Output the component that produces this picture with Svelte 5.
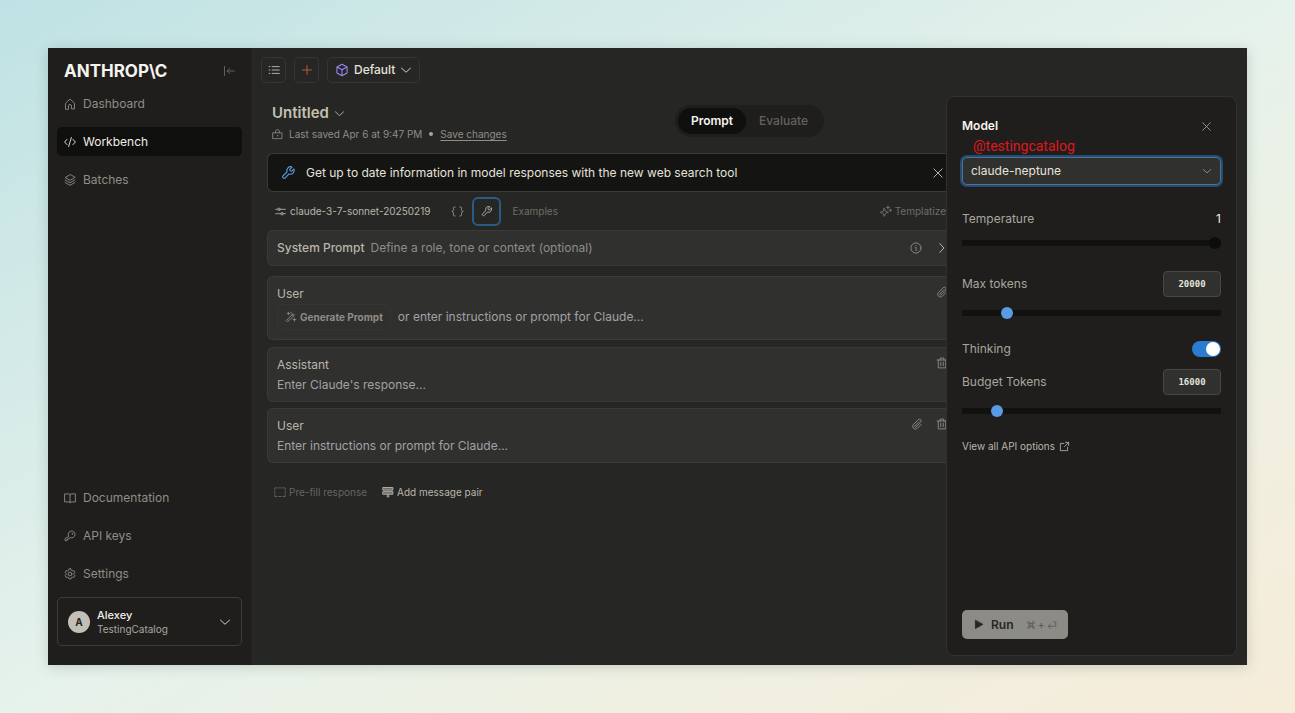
<script>
  let temperature = $state(1);
  let maxTokens = $state(20000);
  let budgetTokens = $state(16000);
  let thinking = $state(true);
  let model = $state('claude-neptune');

  const mainLinks = [
    { label: 'Dashboard', icon: 'home' },
    { label: 'Workbench', icon: 'code', active: true },
    { label: 'Batches', icon: 'stack' }
  ];
  const footLinks = [
    { label: 'Documentation', icon: 'book' },
    { label: 'API keys', icon: 'key' },
    { label: 'Settings', icon: 'gear' }
  ];
</script>

{#snippet icon(name, size = 14)}
  <svg class="icon" width={size} height={size} viewBox="0 0 16 16" aria-hidden="true">
    {#if name === 'home'}
      <path d="M2 14.500V7L8 1.300 14 7v7.500H10v-3.800a2 2 0 0 0-4 0v3.800z" />
    {:else if name === 'code'}
      <path d="M4 4.500.8 8 4 11.500M12 4.500 15.200 8 12 11.500M9.800 2 6.200 14" />
    {:else if name === 'stack'}
      <path d="M8 1 1.500 4.700 8 8.400l6.500-3.700zM1.500 8 8 11.700 14.500 8M1.500 11.300 8 15l6.500-3.700" />
    {:else if name === 'book'}
      <path d="M8 4C8 3 7.200 2.500 6.400 2.500H.8v10.700h5.600c.8 0 1.600.3 1.600 1.200 0-.9.8-1.200 1.600-1.200h5.600V2.500H9.600C8.800 2.500 8 3 8 4v10.400" />
    {:else if name === 'key'}
      <path d="M6.100 8.200A4.600 4.600 0 1 1 8.200 10.100L7 11.200H5.500v1.500H4v1.500H1.500v-2.300z" />
      <circle cx="11" cy="5" r=".5" />
    {:else if name === 'gear'}
      <circle cx="8" cy="8" r="2.500" />
      <path d="m6.800 1.300-.5 1.700-1.500.8-1.800-.4-1.500 2.400 1.200 1.300v1.800l-1.200 1.300L3 12.600l1.800-.4 1.500.8.5 1.700h2.400l.5-1.700 1.500-.8 1.800.4 1.500-2.400-1.200-1.300V7.100l1.200-1.300L13 3.400l-1.800.4L9.700 3l-.5-1.700z" />
    {:else if name === 'collapse'}
      <path d="M2 2v12M15 8H5.500M9 4.500 5.500 8 9 11.500" />
    {:else if name === 'down'}
      <path d="m2 5.500 6 5.500 6-5.500" />
    {:else if name === 'right'}
      <path d="m5 2 5.500 6L5 14" />
    {:else if name === 'list'}
      <path d="M5.500 3.500H15M5.500 8H15M5.500 12.500H15M1.500 3.500h1M1.500 8h1M1.500 12.500h1" />
    {:else if name === 'plus'}
      <path d="M8 2v12M2 8h12" />
    {:else if name === 'cube'}
      <path d="m8 1.500 5.800 3.100v6.800L8 14.500l-5.800-3.100V4.600zM2.200 4.600 8 7.800l5.800-3.200M8 7.800v6.700" />
    {:else if name === 'lock'}
      <path d="M1.500 5.500h13v8.500h-13zM5 5.500V4a3 3 0 0 1 6 0v1.500" />
      <circle cx="8" cy="9.800" r=".4" />
    {:else if name === 'wrench'}
      <path d="M13.800 4.200 11.500 6.500 9.800 6.200 9.500 4.500l2.300-2.300a4 4 0 0 0-5.300 5.200L2.200 11.500a1.600 1.600 0 0 0 2.300 2.300l4.100-4.300a4 4 0 0 0 5.200-5.300z" />
    {:else if name === 'sliders'}
      <path d="M1 4.800h3M7.500 4.800H15M1 11.200h7.500M12 11.200h3" />
      <circle cx="5.800" cy="4.800" r="1.800" />
      <circle cx="10.200" cy="11.200" r="1.800" />
    {:else if name === 'braces'}
      <path d="M5 2.500H4.500C2.500 2.500 3 4 3 5.500S2.800 7.500 1 8c1.800.5 2 1 2 2.500s-.5 3 1.500 3H5M11 2.500h.5c2 0 1.500 1.500 1.500 3s.2 2 2 2.500c-1.800.5-2 1-2 2.500s.5 3-1.500 3H11" />
    {:else if name === 'sparkle'}
      <path d="m6.500 4 1.400 3.600 3.600 1.400-3.600 1.400-1.400 3.600-1.400-3.600L1.500 9l3.600-1.400zM11 1v4M9 3h4M14 5v3M12.500 6.500h3" />
    {:else if name === 'info'}
      <circle cx="8" cy="8" r="6.800" />
      <path d="M7.200 7.300H8V11.200h.8M8 4.600v.4" />
    {:else if name === 'wand'}
      <path d="m2 12.300 8.800-8.800 1.800 1.800-8.800 8.800zM9.200 5l1.800 1.800M4.500 2v3M3 3.500h3M12.500 9.500v4M10.500 11.500h4M8 1.500v1.500" />
    {:else if name === 'clip'}
      <path d="M10.500 5 5.300 10.300a1 1 0 0 0 1.500 1.500l6-6.200a2.300 2.300 0 0 0-3.300-3.300L3.300 8.600a3.600 3.600 0 0 0 5.100 5.100L13.500 8.500" />
    {:else if name === 'trash'}
      <path d="M1.500 4h13M3 4v10.500h10V4M5.500 4V1.500h5V4M6.300 7v4.500M9.700 7v4.500" />
    {:else if name === 'dashed'}
      <path d="M1 5V2.500h3M6.300 2.500h3.400M12 2.500h3V5M15 7v2.500M15 11.500V14h-3M9.700 14H6.300M4 14H1v-2.500M1 9.500V7" />
    {:else if name === 'pair'}
      <path fill="currentColor" fill-opacity=".5" d="M1.500 2h13v3.500h-13zM1.500 7.500h13V11h-13z" />
      <path d="M8 11v4M6.500 13.500h3" />
    {:else if name === 'external'}
      <path d="M9.500 2H14v4.500M14 2 8 8M7 3.500H2V14h10.500V9" />
    {:else if name === 'close'}
      <path d="m2.500 2.500 11 11M13.500 2.500l-11 11" />
    {:else if name === 'play'}
      <path fill="currentColor" d="M3.500 2.200v11.600L14 8z" />
    {:else if name === 'command'}
      <path d="M6 6h4v4H6zM6 6H4.200A1.800 1.800 0 1 1 6 4.200zM10 6V4.200A1.800 1.800 0 1 1 11.800 6zM10 10h1.800a1.800 1.800 0 1 1-1.800 1.800zM6 10v1.800A1.800 1.800 0 1 1 4.200 10z" />
    {:else if name === 'return'}
      <path d="M10 3h4v7H2.500M5.500 6.500 2 10l3.500 3.500" />
    {/if}
  </svg>
{/snippet}

{#snippet navLink(item)}
  <a href="#{item.icon}" class:active={item.active}>
    {@render icon(item.icon, 12)}
    {item.label}
  </a>
{/snippet}

<div class="window">
  <aside class="sidebar">
    <div class="brand">
      <strong>ANTHROP\C</strong>
      <button class="plain" aria-label="Collapse sidebar">{@render icon('collapse', 12)}</button>
    </div>
    <nav aria-label="Main">
      {#each mainLinks as item}{@render navLink(item)}{/each}
    </nav>
    <nav class="foot" aria-label="Resources">
      {#each footLinks as item}{@render navLink(item)}{/each}
    </nav>
    <button class="account">
      <span class="avatar">A</span>
      <span class="who"><b>Alexey</b><small>TestingCatalog</small></span>
      {@render icon('down', 12)}
    </button>
  </aside>

  <main>
    <div class="toolbar">
      <button aria-label="Prompt list">{@render icon('list', 12)}</button>
      <button class="add" aria-label="New prompt">{@render icon('plus', 12)}</button>
      <button class="space">
        <span class="cube">{@render icon('cube', 14)}</span>Default{@render icon('down', 12)}
      </button>
    </div>

    <div class="stage">
      <header>
        <div class="doc">
          <button class="title plain">Untitled {@render icon('down', 11)}</button>
          <div class="saved">
            {@render icon('lock', 11)}
            <span>Last saved Apr 6 at 9:47 PM</span>
            <i></i>
            <a href="#save">Save changes</a>
          </div>
        </div>
        <div class="tabs" role="tablist">
          <button role="tab" aria-selected="true">Prompt</button>
          <button role="tab" aria-selected="false">Evaluate</button>
        </div>
      </header>

      <section class="editor">
        <div class="banner">
          <span class="blue">{@render icon('wrench', 15)}</span>
          <span>Get up to date information in model responses with the new web search tool</span>
          <button class="plain end" aria-label="Dismiss">{@render icon('close', 12)}</button>
        </div>

        <div class="tools">
          <button class="plain model">{@render icon('sliders', 11)}claude-3-7-sonnet-20250219</button>
          <button class="plain" aria-label="Variables">{@render icon('braces', 13)}</button>
          <button class="plain focused" aria-label="Tools">{@render icon('wrench', 12)}</button>
          <button class="plain muted">Examples</button>
          <button class="plain muted end">{@render icon('sparkle', 13)}Templatize</button>
        </div>

        <div class="card system">
          <button class="plain prompt"><b>System Prompt</b><span>Define a role, tone or context (optional)</span></button>
          <button class="plain" aria-label="About system prompts">{@render icon('info', 12)}</button>
          <button class="plain bright" aria-label="Expand">{@render icon('right', 12)}</button>
        </div>

        <div class="card first">
          <div class="head">
            <label for="user-1">User</label>
            <button class="plain" aria-label="Attach file">{@render icon('clip', 12)}</button>
          </div>
          <div class="generate">
            <button>{@render icon('wand', 12)}Generate Prompt</button>
            <textarea id="user-1" rows="1" placeholder="or enter instructions or prompt for Claude..."></textarea>
          </div>
        </div>

        <div class="card turn">
          <div class="head">
            <label for="assistant-1">Assistant</label>
            <button class="plain" aria-label="Delete message">{@render icon('trash', 12)}</button>
          </div>
          <textarea id="assistant-1" rows="1" placeholder="Enter Claude's response..."></textarea>
        </div>

        <div class="card turn">
          <div class="head">
            <label for="user-2">User</label>
            <button class="plain" aria-label="Attach file">{@render icon('clip', 12)}</button>
            <button class="plain" aria-label="Delete message">{@render icon('trash', 12)}</button>
          </div>
          <textarea id="user-2" rows="1" placeholder="Enter instructions or prompt for Claude..."></textarea>
        </div>

        <div class="actions">
          <button class="plain faint">{@render icon('dashed', 12)}Pre-fill response</button>
          <button class="plain pairs">{@render icon('pair', 12)}Add message pair</button>
        </div>
      </section>

      <aside class="panel">
        <div class="row heading">
          <h2><label for="model">Model</label></h2>
          <button class="plain" aria-label="Close panel">{@render icon('close', 11)}</button>
          <span class="handle">@testingcatalog</span>
        </div>
        <div class="select">
          <select id="model" bind:value={model}>
            <option>claude-neptune</option>
          </select>
          {@render icon('down', 10)}
        </div>

        <div class="row temp">
          <label for="temperature">Temperature</label>
          <output for="temperature">{temperature}</output>
        </div>
        <input class="dark" id="temperature" type="range" min="0" max="1" step="0.1" bind:value={temperature} />

        <div class="row field spaced">
          <label for="max-tokens">Max tokens</label>
          <input id="max-tokens" type="text" inputmode="numeric" bind:value={maxTokens} />
        </div>
        <input type="range" aria-label="Max tokens" min="0" max="128000" bind:value={maxTokens} />

        <div class="row thinking">
          <label for="thinking">Thinking</label>
          <input id="thinking" type="checkbox" role="switch" bind:checked={thinking} />
        </div>

        <div class="row field">
          <label for="budget">Budget Tokens</label>
          <input id="budget" type="text" inputmode="numeric" bind:value={budgetTokens} />
        </div>
        <input type="range" aria-label="Budget tokens" min="1024" max="128000" bind:value={budgetTokens} />

        <a class="options" href="#api-options">View all API options {@render icon('external', 11)}</a>

        <button class="run">
          {@render icon('play', 11)}<b>Run</b>
          <kbd>{@render icon('command', 10)}<span>+</span>{@render icon('return', 10)}</kbd>
        </button>
      </aside>
    </div>
  </main>
</div>

<style>
  :global(body) {
    margin: 0;
    background: linear-gradient(to bottom right, #bfe2e4 0%, #d6ebe8 28%, #e6f2ec 50%, #f0f0e1 75%, #f6ecda 100%);
  }
  .window, .window * { box-sizing: border-box; }
  .window {
    display: grid;
    grid-template-columns: 204px minmax(0, 1fr);
    min-height: calc(100vh - 96px);
    margin: 48px;
    background: #262624;
    color: #c3c1b7;
    font: 12px/16px Inter, sans-serif;
    box-shadow: 0 2px 12px rgb(60 80 70 / 22%);
  }
  .icon {
    flex: none;
    display: block;
    fill: none;
    stroke: currentColor;
    stroke-width: 1.2;
    stroke-linejoin: round;
    stroke-linecap: round;
  }
  button {
    display: flex;
    align-items: center;
    font: inherit;
    color: inherit;
    background: none;
    border: 1px solid #353532;
    border-radius: 5px;
    padding: 0;
    white-space: nowrap;
    cursor: pointer;
  }
  .plain { border: 0; }
  a { color: inherit; text-decoration: none; }
  .end { margin-left: auto; }
  b { font-weight: 500; }

  .sidebar {
    display: flex;
    flex-direction: column;
    background: #1f1e1d;
    border-right: 1px solid #232321;
    padding: 14px 9px 19px 9px;
    color: #8f8d85;
  }
  .brand {
    display: flex;
    align-items: center;
    justify-content: space-between;
    padding: 0 7px;
    height: 18px;
    margin-bottom: 9px;
    color: #6a6963;
  }
  .brand strong { font-size: 17px; font-weight: 700; color: #f5f4ee; }
  nav { display: flex; flex-direction: column; gap: 9px; }
  nav a {
    display: flex;
    align-items: center;
    gap: 7px;
    height: 29px;
    padding: 0 7px;
    border-radius: 5px;
  }
  nav a.active { background: #0f0f0e; color: #f0eee6; }
  .foot { margin-top: auto; margin-bottom: 9px; }
  .account {
    height: 49px;
    padding: 0 10px;
    gap: 7px;
    text-align: left;
    color: #e5e3da;
    border-color: #3d3d3a;
  }
  .avatar {
    display: grid;
    place-items: center;
    width: 22px;
    height: 22px;
    border-radius: 50%;
    background: #c2c0b6;
    color: #262624;
    font-size: 10px;
    font-weight: 700;
  }
  .who { flex: 1; display: grid; line-height: 14px; font-size: 11px; color: #f0eee6; }
  .who small { font-size: 10px; color: #a8a69c; }

  main { display: flex; flex-direction: column; min-width: 0; }
  .toolbar { display: flex; gap: 8px; padding: 9px 9px 13px; color: #c3c1b7; }
  .toolbar button { height: 26px; min-width: 25px; justify-content: center; }
  .toolbar .add { color: #c6613f; }
  .toolbar .space { padding: 0 7px; gap: 5px; font-weight: 500; color: #e5e3da; }
  .cube { color: #9b87f5; }

  .stage {
    flex: 1;
    display: grid;
    grid-template-columns: minmax(0, 1fr) 291px;
    grid-template-rows: auto 1fr;
    padding-right: 10px;
    padding-bottom: 9px;
  }
  header {
    grid-area: 1 / 1 / 2 / 3;
    display: grid;
    grid-template-columns: 1fr auto 1fr;
    align-items: start;
    padding: 7px 0 0 10px;
    height: 57px;
  }
  .doc { padding-left: 10px; }
  .title { gap: 5px; font-size: 15px; line-height: 20px; font-weight: 600; color: #c3c1b0; }
  .saved {
    display: flex;
    align-items: center;
    gap: 6px;
    font-size: 10px;
    line-height: 14px;
    margin-top: 4px;
    color: #8f8d85;
    white-space: nowrap;
  }
  .saved i { width: 4px; height: 4px; margin: 0 1px; border-radius: 50%; background: #a8a69c; }
  .saved a { text-decoration: underline; text-underline-offset: 2px; }
  .tabs { display: flex; padding: 3px; margin-top: 2px; border-radius: 16px; background: #1f1e1d; }
  .tabs button {
    height: 26px;
    padding: 0 13px;
    border: 0;
    border-radius: 13px;
    font-weight: 500;
    color: #63625d;
  }
  .tabs button[aria-selected='true'] { background: #0f0f0e; color: #f5f4ee; font-weight: 600; }

  .editor { grid-area: 2 / 1 / 3 / 2; overflow: hidden; padding-left: 15px; }
  .banner {
    display: flex;
    align-items: center;
    gap: 10px;
    height: 39px;
    padding: 0 2px 0 13px;
    border: 1px solid #3a3a37;
    border-right: 0;
    border-radius: 6px 0 0 6px;
    background: #141413;
    color: #e5e3da;
    white-space: nowrap;
  }
  .banner .end { color: #c3c1b7; }
  .blue { color: #5a9be0; }
  .tools { display: flex; align-items: center; height: 38px; padding-left: 8px; font-size: 10px; color: #9a988f; }
  .tools .model { gap: 4px; margin-right: 21px; color: #b8b6ab; }
  .tools .focused {
    width: 29px;
    height: 29px;
    justify-content: center;
    margin: 0 11px 0 8px;
    border: 2px solid #2c5a86;
    border-radius: 6px;
    color: #b8b6ab;
  }
  .muted { color: #6f6e68; gap: 3px; }
  .card {
    margin-right: -2px;
    background: #30302e;
    border: 1px solid #3a3a37;
    border-right: 0;
    border-radius: 6px 0 0 6px;
    padding: 0 0 0 9px;
    color: #8f8d85;
  }
  .system { display: flex; align-items: center; height: 36px; gap: 14px; margin-bottom: 10px; }
  .prompt { flex: 1; gap: 6px; }
  .prompt b, .head label { color: #b8b6ab; }
  .bright { color: #c3c1b7; }
  .first { height: 64px; padding-top: 9px; margin-bottom: 7px; }
  .turn { height: 55px; padding-top: 9px; margin-bottom: 6px; }
  .head { display: flex; gap: 13px; height: 16px; }
  .head label { flex: 1; }
  .head .plain { height: 12px; }
  textarea {
    display: block;
    width: 90%;
    height: 16px;
    margin-top: 4px;
    padding: 0;
    border: 0;
    background: none;
    resize: none;
    overflow: hidden;
    font: inherit;
    color: #e5e3da;
  }
  textarea::placeholder { color: #a3a2a4; opacity: 1; }
  .generate { display: flex; align-items: center; gap: 7px; margin-top: 2px; }
  .generate button { height: 26px; padding: 0 7px; gap: 3px; font-size: 10px; font-weight: 700; }
  .generate textarea { flex: 1; margin: 0; }
  .actions { display: flex; gap: 15px; padding: 15px 7px; font-size: 10px; }
  .actions button { gap: 3px; height: 16px; }
  .faint { color: #66655f; }
  .pairs { color: #b8b6ab; }

  .panel {
    grid-area: 1 / 2 / 3 / 3;
    z-index: 1;
    display: flex;
    flex-direction: column;
    padding: 21px 15px 16px;
    border: 1px solid #30302e;
    border-radius: 8px;
    background: #1f1e1d;
    color: #a8a69c;
  }
  .row { display: flex; align-items: center; justify-content: space-between; }
  .heading { position: relative; height: 16px; padding-right: 9px; color: #a8a69c; }
  h2 { margin: 0; font-size: 12px; font-weight: 600; color: #f5f4ee; }
  .handle {
    position: absolute;
    left: 11px;
    top: 20px;
    font: 14px/16px Roboto, sans-serif;
    color: #e0161b;
  }
  .select {
    position: relative;
    display: flex;
    align-items: center;
    margin-top: 23px;
    margin-bottom: 26px;
  }
  select {
    width: 100%;
    height: 28px;
    padding: 0 8px;
    appearance: none;
    border: 1px solid #4f7396;
    border-radius: 5px;
    box-shadow: 0 0 0 2px #234c74;
    outline: 0;
    background: #30302e;
    color: #e5e3da;
    font: inherit;
  }
  .select .icon { position: absolute; right: 9px; pointer-events: none; }
  .temp { height: 16px; margin-bottom: 10px; }
  output { color: #f0eee6; }
  input[type='range'] {
    appearance: none;
    width: 100%;
    height: 12px;
    margin: 0;
    background: linear-gradient(#11110f, #11110f) center / 100% 6px no-repeat;
    border-radius: 3px;
  }
  input[type='range']::-webkit-slider-thumb {
    appearance: none;
    width: 12px;
    height: 12px;
    border-radius: 50%;
    background: #5a9be6;
  }
  input.dark::-webkit-slider-thumb { background: #0c0c0b; }
  .field { height: 26px; margin-bottom: 10px; }
  .spaced { margin-top: 22px; }
  .field input {
    width: 58px;
    height: 26px;
    padding: 0;
    text-align: center;
    border: 1px solid #484844;
    border-radius: 4px;
    background: #30302e;
    color: #e5e3da;
    font: bold 9px/12px 'DejaVu Sans Mono', monospace;
  }
  .thinking { height: 16px; margin: 22px 0 12px; }
  input[type='checkbox'] {
    appearance: none;
    display: flex;
    justify-content: flex-start;
    width: 29px;
    height: 16px;
    margin: 0;
    padding: 1px;
    border-radius: 8px;
    background: #484844;
  }
  input[type='checkbox']::before { content: ''; width: 14px; height: 14px; border-radius: 50%; background: #fff; }
  input[type='checkbox']:checked { justify-content: flex-end; background: #2a7cd0; }
  .options { display: flex; align-items: center; gap: 4px; margin-top: 21px; font-size: 10px; color: #b8b6ab; }
  .run {
    align-self: flex-start;
    margin-top: auto;
    height: 29px;
    padding: 0 11px;
    gap: 7px;
    border: 0;
    background: #8c8b85;
    color: #262624;
  }
  .run b { font-weight: 600; }
  kbd { display: flex; align-items: center; gap: 2px; margin-left: 5px; font: 11px/16px Inter, sans-serif; color: #55544f; }
</style>
